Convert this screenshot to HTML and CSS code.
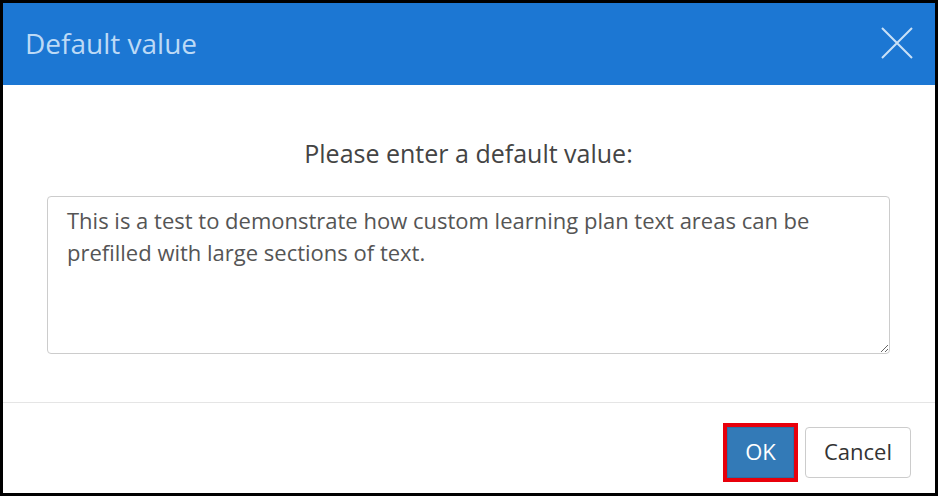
FILE: index.html
```html
<!DOCTYPE html>
<html lang="en">
<head>
<meta charset="UTF-8" />
<title>Default value</title>
<link rel="stylesheet" href="styles.css">
</head>
<body>
  <div class="modal">
    <div class="modal-header">
      <h1 class="modal-title">Default value</h1>
      <button class="close" aria-label="Close">
        <svg width="32" height="32" viewBox="0 0 32 32">
          <path d="M1 1 L31 31 M31 1 L1 31" stroke="#c9e1f7" stroke-width="2" fill="none" />
        </svg>
      </button>
    </div>
    <div class="modal-body">
      <p class="prompt">Please enter a default value:</p>
      <textarea class="value-input">This is a test to demonstrate how custom learning plan text areas can be prefilled with large sections of text.</textarea>
    </div>
    <div class="modal-footer">
      <button class="btn btn-primary">OK</button>
      <button class="btn btn-default">Cancel</button>
    </div>
  </div>
</body>
</html>
```

FILE: styles.css
```css
* {
  margin: 0;
  padding: 0;
  box-sizing: border-box;
}
body {
  font-family: 'Open Sans', 'Liberation Sans', sans-serif;
  background: #fff;
  color: #444;
}
.modal {
  width: 938px;
  height: 496px;
  border: 3px solid #000;
  background: #fff;
  display: flex;
  flex-direction: column;
}

/* Header */
.modal-header {
  height: 82px;
  background: #1c77d3;
  display: flex;
  align-items: center;
  justify-content: space-between;
  padding: 0 22px 3px 22px;
}
.modal-title {
  font-size: 28px;
  font-weight: 400;
  color: #bcdaf6;
}
.close {
  background: none;
  border: none;
  width: 32px;
  height: 32px;
  cursor: pointer;
  display: block;
}
.close svg {
  display: block;
}

/* Body */
.modal-body {
  padding: 52px 45px 48px 44px;
  border-bottom: 1px solid #e5e5e5;
}
.prompt {
  text-align: center;
  font-size: 25px;
  line-height: 32px;
  color: #444;
  margin-bottom: 27px;
}
.value-input {
  display: block;
  width: 100%;
  height: 158px;
  border: 1px solid #ccc;
  border-radius: 4px;
  padding: 7px 19px;
  font-family: 'Open Sans', 'Liberation Sans', sans-serif;
  font-size: 22px;
  line-height: 32px;
  color: #555;
  resize: vertical;
}

/* Footer */
.modal-footer {
  display: flex;
  justify-content: flex-end;
  align-items: flex-start;
  padding: 24px 24px 0 0;
}
.btn {
  font-family: 'Open Sans', 'Liberation Sans', sans-serif;
  font-size: 22px;
  height: 51px;
  border-radius: 4px;
  padding-bottom: 3px;
  cursor: pointer;
}
.btn-primary {
  width: 67px;
  background: #337ab7;
  color: #fff;
  border: 1px solid #2e6da4;
  border-radius: 0;
  outline: 4px solid #e8000b;
}
.btn-default {
  width: 106px;
  margin-left: 11px;
  background: #fff;
  color: #333;
  border: 1px solid #ccc;
}
```
